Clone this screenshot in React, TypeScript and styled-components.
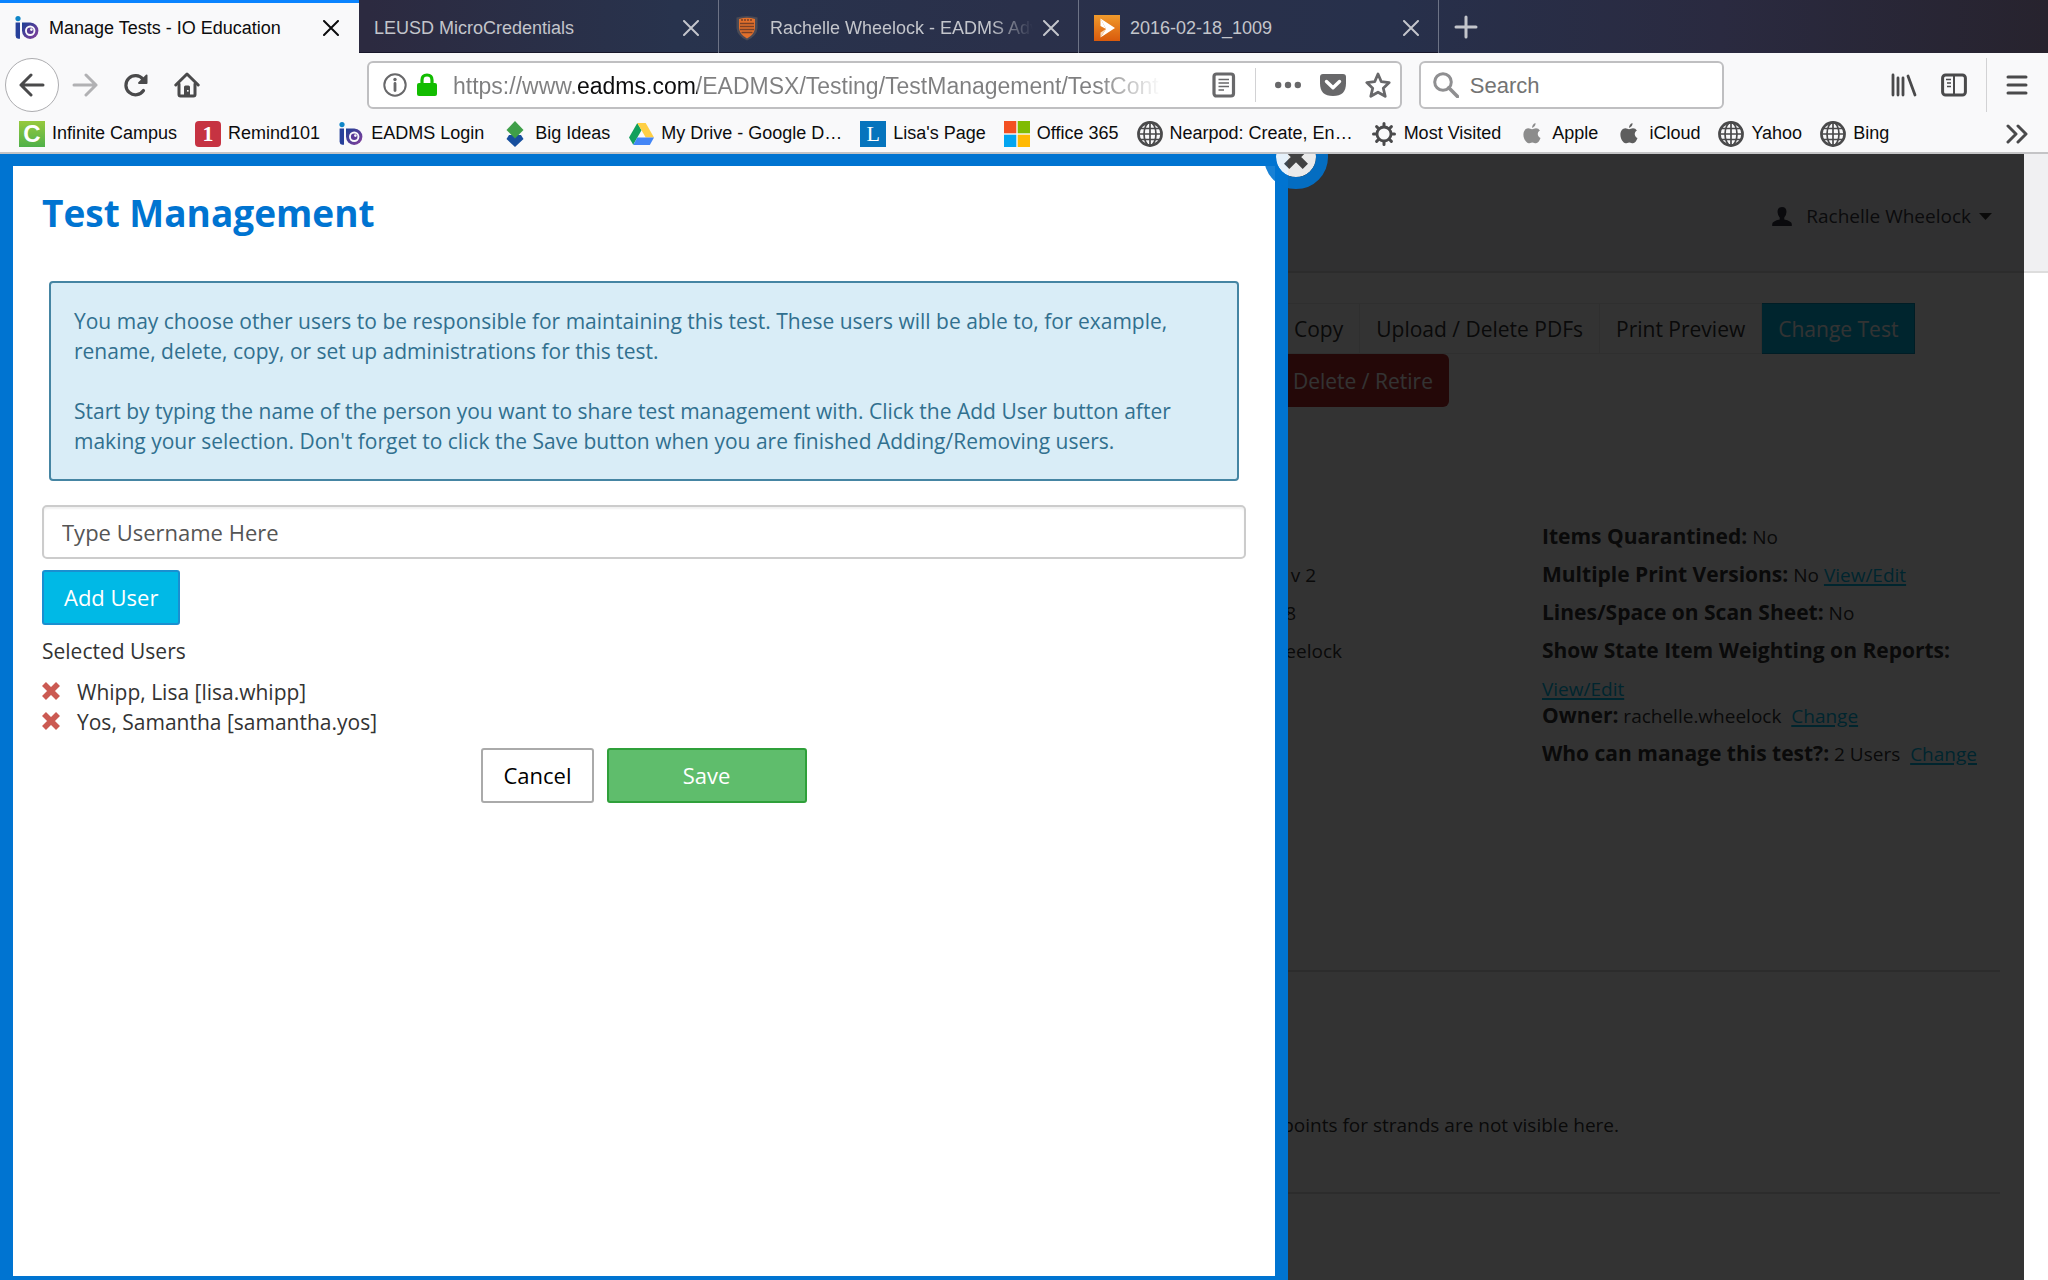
import React, { useState } from "react";
import styled, { createGlobalStyle } from "styled-components";

const chromeFont = '"Liberation Sans", Arial, sans-serif';
const pageFont = '"Open Sans", "Noto Sans", sans-serif';
const brand = "#0074d1";
const cyan = "#00b9e6";

const GlobalStyle = createGlobalStyle`
  *, *::before, *::after { box-sizing: border-box; }
  body { margin: 0; background: #fff; }
  button, input { font: inherit; color: inherit; }
  button { padding: 0; border: 0; background: none; cursor: pointer; }
  h1, p, ul { margin: 0; padding: 0; }
  ul { list-style: none; }
  svg { display: block; flex: none; }
`;

const Window = styled.div`
  display: flex;
  flex-direction: column;
  min-height: 100vh;
  font-family: ${pageFont};
`;

/* ---------- browser chrome ---------- */

const Chrome = styled.header`
  font-family: ${chromeFont};
  font-size: 18px;
  color: #0c0c0d;
  background: #f9f9fa;
  border-bottom: 2px solid #c4c4c6;
`;

const TabStrip = styled.div`
  display: flex;
  height: 53px;
  background: linear-gradient(90deg, #2c2a40 0%, #2c2a40 18%, #28334d 33%, #2a304a 50%, #27304b 68%, #2a2a40 84%, #27232e 100%);
`;

const Tab = styled.div<{ $active?: boolean }>`
  display: flex;
  align-items: center;
  flex: 0 1 ${(p) => (p.$active ? 359 : 360)}px;
  min-width: 0;
  padding: 3px 20px 0 15px;
  color: ${(p) => (p.$active ? "#0c0c0d" : "#c3c5cb")};
  background: ${(p) => (p.$active ? "#f9f9fa" : "transparent")};
  box-shadow: ${(p) => (p.$active ? "inset 0 3px #0a84ff" : "inset -1px 0 #6d7386, inset 0 -1px #17172a")};
`;

const TabTitle = styled.button<{ $fade?: boolean }>`
  display: flex;
  align-items: center;
  gap: 10px;
  flex: 1;
  min-width: 0;
  overflow: hidden;
  white-space: nowrap;
  text-align: left;
  margin-right: 10px;
  ${(p) => p.$fade && "mask-image: linear-gradient(90deg, #000 86%, transparent 100%);"}
`;

const IconButton = styled.button`
  display: grid;
  place-items: center;
  flex: none;
`;

const NewTab = styled(IconButton)`
  width: 54px;
  color: #c3c5cb;
`;

const NavBar = styled.div`
  display: flex;
  align-items: center;
  height: 64px;
  padding: 0 20px 0 5px;
  color: #4a4a4b;
`;

const BackButton = styled(IconButton)`
  width: 54px;
  height: 54px;
  border: 1px solid #adadb0;
  border-radius: 50%;
  background: #fff;
`;

const NavButton = styled(IconButton)<{ $dim?: boolean }>`
  width: 26px;
  margin-left: ${(p) => (p.$dim ? 13 : 25)}px;
  color: ${(p) => (p.$dim ? "#b1b1b3" : "inherit")};
`;

const Field = styled.label`
  display: flex;
  align-items: center;
  height: 48px;
  border: 2px solid #bfbfc1;
  border-radius: 6px;
  background: #fff;
  font-size: 22px;
  color: #68686a;
`;

const UrlField = styled(Field)`
  flex: 1007 1 0;
  min-width: 0;
  margin-left: 167px;
  padding: 0 9px 0 14px;
`;

const SearchField = styled(Field)`
  flex: 277 1 0;
  min-width: 0;
  margin: 0 167px 0 17px;
  padding: 0 12px;
  gap: 11px;
  color: #8f8f91;
`;

const PlainInput = styled.input`
  flex: 1;
  min-width: 0;
  padding: 2px 0 0;
  border: 0;
  outline: 0;
  background: none;
  &::placeholder { color: #737373; opacity: 1; }
`;

const UrlInput = styled(PlainInput)`
  flex: 0 1 712px;
  margin: 0 auto 0 16px;
  font-size: 23px;
  background: linear-gradient(90deg, #7f7f80 0 125px, #0c0c0d 125px 244px, #7f7f80 244px 644px, transparent 708px);
  background-clip: text;
  -webkit-background-clip: text;
  -webkit-text-fill-color: transparent;
`;

const FieldActions = styled.div`
  display: flex;
  align-items: center;
  gap: 19px;
`;

const Rule = styled.span<{ $tall?: boolean }>`
  width: 1px;
  height: ${(p) => (p.$tall ? 54 : 34)}px;
  background: #d2d2d4;
`;

const NavEnd = styled.div<{ $gap: number }>`
  display: flex;
  align-items: center;
  gap: ${(p) => p.$gap}px;
`;

const Bookmarks = styled.nav`
  display: flex;
  align-items: center;
  gap: 18px;
  height: 35px;
  padding: 0 20px 2px 19px;
  white-space: nowrap;
`;

const Bookmark = styled.a`
  display: flex;
  align-items: center;
  gap: 7px;
  color: inherit;
  text-decoration: none;
`;

const BookmarkIcon = styled.span`
  display: grid;
  place-items: center;
  width: 26px;
  height: 26px;
`;

const LetterTile = styled(BookmarkIcon)<{ $bg: string; $round?: boolean; $serif?: boolean }>`
  color: #fff;
  background: ${(p) => p.$bg};
  border-radius: ${(p) => (p.$round ? 4 : 0)}px;
  font: ${(p) => (p.$serif ? '22px/26px "Liberation Serif", serif' : "bold 24px/26px " + chromeFont)};
`;

const Overflow = styled(IconButton)`
  margin-left: auto;
  color: #4a4a4b;
`;

/* ---------- web page ---------- */

const Stage = styled.main`
  position: relative;
  flex: 1;
  display: grid;
  grid-template-columns: minmax(0, 1288fr) minmax(0, 760fr);
  overflow: hidden;
`;

const Modal = styled.section`
  position: relative;
  z-index: 2;
  padding: 22px 29px;
  border: solid ${brand};
  border-width: 12px 13px 4px;
  background: #fff;
  color: #333;
  font-size: 21px;
  line-height: 30px;
`;

const CloseModal = styled(IconButton)`
  position: absolute;
  top: -41px;
  right: -53px;
  width: 64px;
  height: 64px;
  border: 12px solid ${brand};
  border-radius: 50%;
  background: #fff;
  background-clip: padding-box;
  color: #444;
  opacity: 0.9;
`;

const Title = styled.h1`
  font-size: 37px;
  line-height: 50px;
  color: ${brand};
`;

const Notice = styled.div`
  margin: 43px 7px 24px;
  padding: 23px 23px 23px;
  border: 2px solid #4585a3;
  border-radius: 4px;
  background: #d9edf7;
  color: #31708f;
  p + p { margin-top: 30px; }
`;

const UserInput = styled.input`
  display: block;
  width: 100%;
  height: 54px;
  padding: 0 18px 1px;
  border: 2px solid #ccc;
  border-radius: 5px;
  background: #fff;
  box-shadow: inset 0 2px 2px rgba(0, 0, 0, 0.06);
  font-size: 22px;
  &::placeholder { color: #555; opacity: 1; }
`;

const tones = {
  info: "color:#fff;background:#00b9e6;border-color:#1a8fd0;",
  plain: "color:#000;background:#fff;border-color:#aaa;",
  success: "color:#fff;background:#5fbd6c;border-color:#2fa03a;",
};

const Button = styled.button<{ $tone: keyof typeof tones; $wide?: boolean }>`
  height: 55px;
  min-width: ${(p) => (p.$wide ? 200 : 110)}px;
  padding: 0 20px 2px;
  border: 2px solid;
  border-radius: 3px;
  font-size: 22px;
  ${(p) => tones[p.$tone]}
`;

const FormStack = styled.form`
  display: flex;
  flex-direction: column;
  align-items: flex-start;
  gap: 11px;
`;

const UserRow = styled.li`
  display: flex;
  gap: 17px;
`;

const RemoveButton = styled(IconButton)`
  align-self: flex-start;
  height: 27px;
  width: 18px;
  color: #cb5a52;
`;

const Actions = styled.div`
  display: flex;
  gap: 13px;
  align-self: center;
`;

const Page = styled.section`
  position: relative;
  color: #333;
  font-size: 19px;
  line-height: 27px;
`;

const Shade = styled.div`
  position: absolute;
  inset: 0 24px 0 0;
  background: rgba(0, 0, 0, 0.8);
  pointer-events: none;
`;

const PageHeader = styled.div`
  display: flex;
  justify-content: flex-end;
  align-items: center;
  height: 119px;
  padding: 7px 56px 0 0;
  background: #f0f0f2;
  border-bottom: 2px solid #ddd;
`;

const Account = styled.button`
  display: flex;
  align-items: center;
  color: #3a3a44;
`;

const AccountName = styled.span`
  margin: 0 8px 0 14px;
`;

const Toolbar = styled.div`
  display: flex;
  margin-top: 30px;
  white-space: nowrap;
`;

const ToolButton = styled.button<{ $primary?: boolean; $first?: boolean }>`
  height: 51px;
  padding: 2px 16px 0 ${(p) => (p.$first ? 6 : 16)}px;
  border: solid ${(p) => (p.$primary ? "#008fb8" : "#eaeaea")};
  border-width: 1px 1px 1px 0;
  font-size: 21px;
  background: ${(p) => (p.$primary ? cyan : "transparent")};
  color: ${(p) => (p.$primary ? "#fff" : "#333")};
`;

const DangerButton = styled.button`
  height: 53px;
  padding: 2px 16px 0 5px;
  border-radius: 0 6px 6px 0;
  background: #b42828;
  color: #fff;
  font-size: 21px;
`;

const Details = styled.div`
  display: grid;
  grid-template-columns: 254px minmax(0, 1fr);
  margin-top: 117px;
`;

const Column = styled.ul<{ $offset?: boolean }>`
  display: flex;
  flex-direction: column;
  gap: 11px;
  padding-top: ${(p) => (p.$offset ? 38 : 0)}px;
`;

const Cut = styled.li<{ $width: number }>`
  display: flex;
  justify-content: flex-end;
  width: ${(p) => p.$width}px;
  overflow: hidden;
  white-space: nowrap;
`;

const Label = styled.b`
  font-size: 21px;
  line-height: 1;
`;

const Block = styled.span`
  display: block;
`;

const PageLink = styled.a`
  color: ${cyan};
  text-decoration: underline 2px;
  text-underline-offset: 2px;
`;

const Divider = styled.hr<{ $space: number }>`
  height: 2px;
  margin: ${(p) => p.$space}px 48px 0 0;
  border: 0;
  background: #dcdcdc;
`;

const Note = styled.p`
  display: flex;
  justify-content: flex-end;
  width: 331px;
  margin-top: 140px;
  overflow: hidden;
  white-space: nowrap;
`;

/* ---------- drawings ---------- */

const Cross = ({ size = 16, w = 2 }: { size?: number; w?: number }) => (
  <svg width={size} height={size} viewBox="0 0 16 16" stroke="currentColor" strokeWidth={w} strokeLinecap="round">
    <path d="M1 1 15 15M15 1 1 15" />
  </svg>
);

const HeavyCross = ({ size }: { size: number }) => (
  <svg width={size} height={size} viewBox="0 0 18 18" stroke="currentColor" strokeWidth="5.6" strokeLinecap="butt">
    <path d="M2 2 16 16M16 2 2 16" />
  </svg>
);

const IoLogo = ({ id }: { id: string }) => (
  <svg width="24" height="24" viewBox="0 0 24 24">
    <defs>
      <linearGradient id={id} x1="0" y1="0" x2="1" y2="1">
        <stop offset="0" stopColor="#1c3f94" />
        <stop offset="1" stopColor="#8a3f9c" />
      </linearGradient>
    </defs>
    <circle cx="3" cy="2.600" r="2.600" fill="#0f86c8" />
    <path d="M.6 6.500H5V22.800H3.200Q.6 22.400.6 19.800z" fill="#27409a" />
    <path d="M7 6.500H15.300A8.200 8.200 0 1 1 7 14.700z" fill={`url(#${id})`} />
    <circle cx="15.200" cy="14.800" r="5.200" fill="#f9f9fa" />
    <circle cx="15.200" cy="14.800" r="3.300" fill="#5b3b98" />
    <circle cx="16.400" cy="13.600" r="1.300" fill="#f9f9fa" />
  </svg>
);

const Shield = () => (
  <svg width="26" height="26" viewBox="0 0 26 26">
    <path d="M2.500 2.500Q13-.5 23.500 2.500V13Q23 21 13 25.500 3 21 2.500 13z" fill="#4a4a55" />
    <path d="M5 4Q13 1.500 21 4V13Q20.500 19.500 13 23.500 5.500 19.500 5 13z" fill="#e2702c" />
    <path d="M6 8.500H20M6 11.500H20M6 14.500H20M7.500 17.500H18.500" stroke="#7a4026" strokeWidth="1.300" />
    <path d="M7 5H19" stroke="#7a4026" strokeWidth="1.500" strokeDasharray="2 1" />
  </svg>
);

const Jing = () => (
  <svg width="26" height="26" viewBox="0 0 26 26">
    <defs>
      <linearGradient id="jing" x1="0" y1="0" x2="0" y2="1">
        <stop offset="0" stopColor="#f09a2c" />
        <stop offset="1" stopColor="#d95a0c" />
      </linearGradient>
    </defs>
    <rect width="26" height="26" fill="url(#jing)" />
    <path d="M6.500 3.500 21 13 6.500 22.500 12 14z" fill="#fff" />
    <path d="M6.500 3.500V11L12 14z" fill="#fff" />
    <path d="M6.500 22.500V17.500L12 14z" fill="#f7d9bb" />
  </svg>
);

const Arrow = ({ flip }: { flip?: boolean }) => (
  <svg width="26" height="24" viewBox="0 0 26 24" fill="none" stroke="currentColor" strokeWidth="3" strokeLinecap="round" strokeLinejoin="round">
    <path d={flip ? "M2 12H24M14 2 24 12 14 22" : "M24 12H2M12 2 2 12 12 22"} />
  </svg>
);

const Reload = () => (
  <svg width="26" height="26" viewBox="0 0 26 26" fill="none" stroke="currentColor" strokeWidth="3.200" strokeLinecap="round">
    <path d="M20.500 18.500A9.600 9.600 0 1 1 20 7.200" />
    <path d="M23.600 3.500V11H16z" fill="currentColor" strokeWidth="1.800" strokeLinejoin="round" />
  </svg>
);

const Home = () => (
  <svg width="26" height="26" viewBox="0 0 26 26" fill="none" stroke="currentColor" strokeWidth="3" strokeLinecap="round" strokeLinejoin="round">
    <path d="M1.800 13 13 2 24.200 13" />
    <path d="M5 12V22.500Q5 24 6.500 24H19.500Q21 24 21 22.500V12" />
    <path d="M10 23V15Q10 13.500 11.500 13.500H14.500Q16 13.500 16 15V23z" fill="currentColor" stroke="none" />
    <rect x="13" y="18" width="1.600" height="1.600" fill="#f9f9fa" stroke="none" />
  </svg>
);

const Info = () => (
  <svg width="24" height="24" viewBox="0 0 24 24" fill="none" stroke="currentColor" strokeWidth="2">
    <circle cx="12" cy="12" r="10.700" />
    <path d="M12 10.500V17.500" strokeWidth="2.800" strokeLinecap="round" />
    <circle cx="12" cy="6.500" r="1.700" fill="currentColor" stroke="none" />
  </svg>
);

const Lock = () => (
  <svg width="30" height="24" viewBox="-10 0 30 24">
    <path d="M5 12V7Q5 2 10 2T15 7V12" fill="none" stroke="#12bc00" strokeWidth="3.200" />
    <rect y="10" width="20" height="13" rx="2" fill="#12bc00" />
  </svg>
);

const Reader = () => (
  <svg width="24" height="26" viewBox="0 0 24 26" fill="none" stroke="currentColor">
    <rect x="2" y="2" width="19.500" height="22" rx="2.500" strokeWidth="3.200" />
    <path d="M6.500 7.500H17M6.500 11H17M6.500 14.500H17M6.500 18H12" strokeWidth="1.600" />
  </svg>
);

const Dots = () => (
  <svg width="26" height="8" viewBox="0 0 26 8" fill="currentColor">
    <circle cx="3.200" cy="4" r="3.200" />
    <circle cx="13" cy="4" r="3.200" />
    <circle cx="22.800" cy="4" r="3.200" />
  </svg>
);

const Pocket = () => (
  <svg width="26" height="24" viewBox="0 0 26 24">
    <path d="M3 1H23Q26 1 26 4V10.500Q26 23 13 23T0 10.500V4Q0 1 3 1z" fill="currentColor" />
    <path d="M6.500 8.500 13 14.800 19.500 8.500" fill="none" stroke="#fff" strokeWidth="3.400" strokeLinecap="round" strokeLinejoin="round" />
  </svg>
);

const Star = () => (
  <svg width="26" height="26" viewBox="0 0 26 26" fill="none" stroke="currentColor" strokeWidth="2.800" strokeLinejoin="round">
    <path d="M13 2 16.300 9.700 24.200 10.600 18.300 16.200 20.200 24.300 13 20.200 5.800 24.300 7.700 16.200 1.800 10.600 9.700 9.700z" />
  </svg>
);

const Magnifier = () => (
  <svg width="26" height="26" viewBox="0 0 26 26" fill="none" stroke="currentColor" strokeWidth="3">
    <circle cx="10" cy="10" r="8.300" />
    <path d="M15.800 15.800 24.500 24.500" strokeWidth="3.600" strokeLinecap="round" />
  </svg>
);

const Library = () => (
  <svg width="26" height="24" viewBox="0 0 26 24" fill="none" stroke="currentColor" strokeWidth="2.800" strokeLinecap="round">
    <path d="M2 2V22M7 5V22M12 5V22M17 3 24 22" />
  </svg>
);

const Sidebar = () => (
  <svg width="26" height="24" viewBox="0 0 26 24" fill="none" stroke="currentColor">
    <rect x="1.600" y="2" width="22.800" height="20" rx="3" strokeWidth="3" />
    <path d="M13 2V22" strokeWidth="2" />
    <path d="M5 6.500H10M6 10H10M6 13.500H10" strokeWidth="1.600" />
  </svg>
);

const Burger = () => (
  <svg width="22" height="20" viewBox="0 0 22 20" stroke="currentColor" strokeWidth="3" strokeLinecap="round">
    <path d="M2 2H20M2 10H20M2 18H20" />
  </svg>
);

const Globe = () => (
  <svg width="26" height="26" viewBox="0 0 26 26" fill="none" stroke="#4a4a4b" strokeWidth="1.700">
    <circle cx="13" cy="13" r="11.600" strokeWidth="2.600" />
    <ellipse cx="13" cy="13" rx="6" ry="11.600" />
    <path d="M13 1V25M1.500 13H24.500M3 7.500H23M3 18.500H23" />
  </svg>
);

const Gear = () => (
  <svg width="24" height="24" viewBox="0 0 24 24" fill="none" stroke="#4a4a4b">
    <circle cx="12" cy="12" r="7" strokeWidth="2.800" />
    <path
      d="M12 1.500V4M12 20V22.500M1.500 12H4M20 12H22.500M4.600 4.600 6.500 6.500M17.500 17.500 19.400 19.400M4.600 19.400 6.500 17.500M17.500 6.500 19.400 4.600"
      strokeWidth="3"
      strokeLinecap="round"
    />
  </svg>
);

const AppleMark = ({ color }: { color: string }) => (
  <svg width="18" height="21" viewBox="0 0 18 21" fill={color}>
    <path d="M12.500 0Q12.700 3.600 9.100 4.900 8.900 1.500 12.500 0z" />
    <path d="M9 6.300C10.500 6.300 11.300 5.300 13 5.300Q15.500 5.400 16.900 7.400C13.700 9.300 14.300 13.600 17.500 14.900 16.500 17.700 14.900 20.200 13 20.200 11.600 20.200 11 19.400 9.300 19.400S6.900 20.200 5.600 20.200C3.200 20.200.4 15.600.4 11.700.4 7.700 2.700 5.400 5.300 5.300 6.900 5.300 7.800 6.300 9 6.300z" />
  </svg>
);

const BigIdeas = () => (
  <svg width="18" height="26" viewBox="0 0 18 26">
    <path d="M3 14H15L17.500 18 9 26 .5 18z" fill="#174f9e" />
    <path d="M9 0 17.500 9 12 14.500 9 17.500 6 14.500.5 9z" fill="#3f9f49" />
  </svg>
);

const Drive = () => (
  <svg width="25" height="22" viewBox="0 0 25 22">
    <path d="M8.300 0 12.500 7.200 4.200 21.800 0 14.600z" fill="#11a05c" />
    <path d="M8.300 0H16.700L25 14.600H16.700z" fill="#ffcf44" />
    <path d="M8.300 14.600H25L20.800 22H4.200z" fill="#4386f6" />
  </svg>
);

const Windows = () => (
  <svg width="26" height="26" viewBox="0 0 26 26">
    <path d="M0 0H12.300V12.300H0z" fill="#f35022" />
    <path d="M13.700 0H26V12.300H13.700z" fill="#80bb03" />
    <path d="M0 13.700H12.300V26H0z" fill="#03a5f0" />
    <path d="M13.700 13.700H26V26H13.700z" fill="#ffb903" />
  </svg>
);

const Chevrons = () => (
  <svg width="22" height="20" viewBox="0 0 22 20" fill="none" stroke="currentColor" strokeWidth="3" strokeLinecap="round" strokeLinejoin="round">
    <path d="M2 2 10 10 2 18M12 2 20 10 12 18" />
  </svg>
);

const Person = () => (
  <svg width="20" height="19" viewBox="0 0 20 19" fill="#333344">
    <path d="M10 0Q14.500 0 14.500 5 14.300 8.500 12.300 10.500V12.500Q19.500 14 19.800 17V19H.2V17Q.5 14 7.700 12.500V10.500Q5.700 8.500 5.500 5 5.500 0 10 0z" />
  </svg>
);

const Caret = () => (
  <svg width="13" height="7" viewBox="0 0 13 7" fill="#333">
    <path d="M0 0H13L6.500 7z" />
  </svg>
);

/* ---------- data ---------- */

const tabs = [
  { title: "Manage Tests - IO Education", icon: <IoLogo id="io-tab" />, active: true },
  { title: "LEUSD MicroCredentials" },
  { title: "Rachelle Wheelock - EADMS Adv", icon: <Shield />, fade: true },
  { title: "2016-02-18_1009", icon: <Jing /> },
];

const icon = (node: React.ReactNode) => <BookmarkIcon>{node}</BookmarkIcon>;

const bookmarks = [
  { name: "Infinite Campus", icon: <LetterTile $bg="linear-gradient(#96c93d, #4fb04a)">C</LetterTile> },
  { name: "Remind101", icon: <LetterTile $bg="#c63342" $round $serif><b>1</b></LetterTile> },
  { name: "EADMS Login", icon: icon(<IoLogo id="io-bookmark" />) },
  { name: "Big Ideas", icon: icon(<BigIdeas />) },
  { name: "My Drive - Google D…", icon: icon(<Drive />) },
  { name: "Lisa's Page", icon: <LetterTile $bg="#0674bd" $serif>L</LetterTile> },
  { name: "Office 365", icon: icon(<Windows />) },
  { name: "Nearpod: Create, En…", icon: icon(<Globe />) },
  { name: "Most Visited", icon: icon(<Gear />) },
  { name: "Apple", icon: icon(<AppleMark color="#8c8c8c" />) },
  { name: "iCloud", icon: icon(<AppleMark color="#5e5e5e" />) },
  { name: "Yahoo", icon: icon(<Globe />) },
  { name: "Bing", icon: icon(<Globe />) },
];

const BrowserChrome = () => (
  <Chrome>
    <TabStrip>
      {tabs.map((t) => (
        <Tab key={t.title} $active={t.active}>
          <TabTitle $fade={t.fade}>
            {t.icon}
            {t.title}
          </TabTitle>
          <IconButton aria-label="Close tab"><Cross /></IconButton>
        </Tab>
      ))}
      <NewTab aria-label="New tab">
        <svg width="24" height="24" viewBox="0 0 24 24" stroke="currentColor" strokeWidth="3" strokeLinecap="round">
          <path d="M12 2V22M2 12H22" />
        </svg>
      </NewTab>
    </TabStrip>
    <NavBar>
      <BackButton aria-label="Back"><Arrow /></BackButton>
      <NavButton $dim aria-label="Forward"><Arrow flip /></NavButton>
      <NavButton aria-label="Reload"><Reload /></NavButton>
      <NavButton aria-label="Home"><Home /></NavButton>
      <UrlField>
        <Info />
        <Lock />
        <UrlInput
          aria-label="Address"
          defaultValue="https://www.eadms.com/EADMSX/Testing/TestManagement/TestCont"
        />
        <FieldActions>
          <IconButton type="button" aria-label="Reader view"><Reader /></IconButton>
          <Rule />
          <IconButton type="button" aria-label="Page actions"><Dots /></IconButton>
          <IconButton type="button" aria-label="Save to Pocket"><Pocket /></IconButton>
          <IconButton type="button" aria-label="Bookmark this page"><Star /></IconButton>
        </FieldActions>
      </UrlField>
      <SearchField>
        <Magnifier />
        <PlainInput aria-label="Search" placeholder="Search" />
      </SearchField>
      <NavEnd $gap={19}>
        <NavEnd $gap={24}>
          <IconButton aria-label="Library"><Library /></IconButton>
          <IconButton aria-label="Sidebars"><Sidebar /></IconButton>
        </NavEnd>
        <Rule $tall />
        <IconButton aria-label="Menu"><Burger /></IconButton>
      </NavEnd>
    </NavBar>
    <Bookmarks aria-label="Bookmarks">
      {bookmarks.map((b) => (
        <Bookmark key={b.name} href="#">
          {b.icon}
          {b.name}
        </Bookmark>
      ))}
      <Overflow aria-label="More bookmarks"><Chevrons /></Overflow>
    </Bookmarks>
  </Chrome>
);

export default function App() {
  const [users, setUsers] = useState(["Whipp, Lisa [lisa.whipp]", "Yos, Samantha [samantha.yos]"]);

  return (
    <Window>
      <GlobalStyle />
      <BrowserChrome />
      <Stage>
        <Modal role="dialog" aria-labelledby="dialog-title">
          <CloseModal aria-label="Close"><HeavyCross size={24} /></CloseModal>
          <Title id="dialog-title">Test Management</Title>
          <Notice>
            <p>
              You may choose other users to be responsible for maintaining this test. These users will be able to, for
              example, rename, delete, copy, or set up administrations for this test.
            </p>
            <p>
              Start by typing the name of the person you want to share test management with. Click the Add User button
              after making your selection. Don't forget to click the Save button when you are finished Adding/Removing
              users.
            </p>
          </Notice>
          <FormStack onSubmit={(e) => e.preventDefault()}>
            <UserInput aria-label="Username" placeholder="Type Username Here" />
            <Button type="button" $tone="info">Add User</Button>
            <p>Selected Users</p>
            <ul>
              {users.map((u) => (
                <UserRow key={u}>
                  <RemoveButton
                    type="button"
                    aria-label={`Remove ${u}`}
                    onClick={() => setUsers(users.filter((x) => x !== u))}
                  >
                    <HeavyCross size={18} />
                  </RemoveButton>
                  {u}
                </UserRow>
              ))}
            </ul>
            <Actions>
              <Button type="button" $tone="plain">Cancel</Button>
              <Button type="submit" $tone="success" $wide>Save</Button>
            </Actions>
          </FormStack>
        </Modal>
        <Page>
          <PageHeader>
            <Account>
              <Person />
              <AccountName>Rachelle Wheelock</AccountName>
              <Caret />
            </Account>
          </PageHeader>
          <Toolbar>
            <ToolButton $first>Copy</ToolButton>
            <ToolButton>Upload / Delete PDFs</ToolButton>
            <ToolButton>Print Preview</ToolButton>
            <ToolButton $primary>Change Test</ToolButton>
          </Toolbar>
          <DangerButton>Delete / Retire</DangerButton>
          <Details>
            <Column $offset>
              <Cut $width={28}>v 2</Cut>
              <Cut $width={8}>8</Cut>
              <Cut $width={54}>eelock</Cut>
            </Column>
            <Column>
              <li><Label>Items Quarantined:</Label> No</li>
              <li><Label>Multiple Print Versions:</Label> No <PageLink href="#">View/Edit</PageLink></li>
              <li><Label>Lines/Space on Scan Sheet:</Label> No</li>
              <li><Label>Show State Item Weighting on Reports:</Label></li>
              <li>
                <Block><PageLink href="#">View/Edit</PageLink></Block>
                <Block><Label>Owner:</Label> rachelle.wheelock &nbsp;<PageLink href="#">Change</PageLink></Block>
              </li>
              <li><Label>Who can manage this test?:</Label> 2 Users &nbsp;<PageLink href="#">Change</PageLink></li>
            </Column>
          </Details>
          <Divider $space={202} />
          <Note>points for strands are not visible here.</Note>
          <Divider $space={53} />
          <Shade />
        </Page>
      </Stage>
    </Window>
  );
}
